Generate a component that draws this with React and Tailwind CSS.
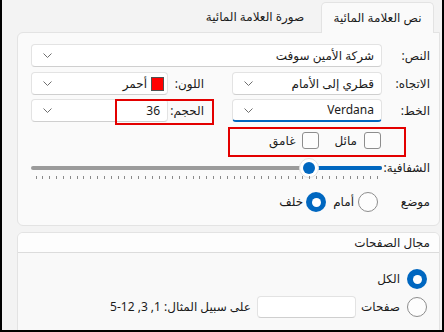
import React from 'react';

const TICKS = Array.from({ length: 51 }, (_, i) => i);

function Chevron() {
    return (
        <svg width="9" height="5" viewBox="0 0 9 5" className="shrink-0">
            <path d="M0.5 0.5 L4.5 4.5 L8.5 0.5" fill="none" stroke="#6e6e6e" strokeWidth="1" />
        </svg>
    );
}

function Combo({ className = '', focused = false, children }) {
    return (
        <div
            className={`h-[23px] bg-white rounded-[4px] border border-[#e3e3e3] flex items-center justify-between pr-[7px] pl-[11px] ${focused ? 'border-b-2 border-b-[#0067c0]' : 'border-b-[#cfcfcf]'} ${className}`}
        >
            <div className="flex items-center gap-[4px]">{children}</div>
            <Chevron />
        </div>
    );
}

function Checkbox({ label }) {
    return (
        <div className="flex items-center gap-[7px]">
            <div className="w-[17px] h-[17px] rounded-[3px] border border-[#8d8d8d] bg-[#fdfdfd]" />
            <span>{label}</span>
        </div>
    );
}

function Radio({ checked }) {
    if (checked) {
        return (
            <div className="w-[20px] h-[20px] rounded-full bg-[#0067c0] flex items-center justify-center shrink-0">
                <div className="w-[9px] h-[9px] rounded-full bg-white" />
            </div>
        );
    }
    return <div className="w-[20px] h-[20px] rounded-full border border-[#8d8d8d] bg-[#fdfdfd] shrink-0" />;
}

function Slider({ fromRight = 73 }) {
    return (
        <div className="relative w-[351px] h-[24px]">
            <div className="absolute inset-x-0 top-[8px] h-[4px] rounded-full bg-[#9b9b9b]" />
            <div className="absolute right-0 top-[8px] h-[4px] rounded-full bg-[#0067c0]" style={{ width: fromRight }} />
            <div
                className="absolute top-0 w-[20px] h-[20px] rounded-full bg-white border border-[#e2e2e2] flex items-center justify-center"
                style={{ right: fromRight - 10 }}
            >
                <div className="w-[12px] h-[12px] rounded-full bg-[#0067c0]" />
            </div>
            <div className="absolute inset-x-[4px] top-[18px] flex justify-between">
                {TICKS.map(t => (
                    <div key={t} className="w-px h-[3px] bg-[#8a8a8a]" />
                ))}
            </div>
        </div>
    );
}

export default function App() {
    return (
        <div
            dir="rtl"
            className="relative w-[444px] h-[332px] overflow-hidden border-x-2 border-b-2 border-black bg-[#f3f3f3] text-[12px] leading-none text-[#1b1b1b] font-['Noto_Sans','DejaVu_Sans',sans-serif]"
        >
            {/* tab strip */}
            <div className="flex items-end h-[32px] pr-[8px] pl-[2px]">
                <div className="relative z-10 -mb-px w-[113px] h-[31px] flex items-center justify-center bg-[#fafafa] border border-b-0 border-[#e3e3e3] rounded-t-[5px]">
                    نص العلامة المائية
                </div>
                <div className="w-[132px] h-[31px] flex items-center justify-center">
                    صورة العلامة المائية
                </div>
            </div>

            {/* watermark text panel */}
            <div className="ml-[15px] mr-[2px] h-[194px] bg-[#fafafa] border border-[#e3e3e3] rounded-[6px] rounded-tr-none pr-[9px] pl-[13px] pt-[11px]">
                <div className="flex items-center">
                    <div className="w-[48px] shrink-0">النص:</div>
                    <Combo className="flex-1">شركة الأمين سوفت</Combo>
                </div>

                <div className="flex items-center mt-[5px]">
                    <div className="w-[48px] shrink-0">الاتجاه:</div>
                    <Combo className="w-[150px]">قطري إلى الأمام</Combo>
                    <div className="w-[28px] shrink-0" />
                    <div className="w-[36px] shrink-0">اللون:</div>
                    <Combo className="flex-1 !pr-[3px]">
                        <div className="w-[13px] h-[14px] bg-[#ff0000] border border-[#505050]" />
                        <span>أحمر</span>
                    </Combo>
                </div>

                <div className="flex items-center mt-[4px]">
                    <div className="w-[48px] shrink-0">الخط:</div>
                    <Combo className="w-[150px]" focused>Verdana</Combo>
                    <div className="w-[28px] shrink-0" />
                    <div className="w-[36px] shrink-0">الحجم:</div>
                    <Combo className="flex-1">36</Combo>
                </div>

                <div className="flex items-center mt-[10px] pr-[49px] gap-[15px] h-[17px]">
                    <Checkbox label="مائل" />
                    <Checkbox label="غامق" />
                </div>

                <div className="flex items-start mt-[9px]">
                    <div className="w-[48px] shrink-0 pt-[4px]">الشفافية:</div>
                    <Slider fromRight={73} />
                </div>

                <div className="flex items-center mt-[10px] h-[20px]">
                    <div className="w-[52px] shrink-0">موضع</div>
                    <Radio />
                    <span className="mr-[4px]">أمام</span>
                    <div className="mr-[7px]"><Radio checked /></div>
                    <span className="mr-[3px]">خلف</span>
                </div>
            </div>

            {/* page range panel */}
            <div className="ml-[15px] mr-[2px] mt-[6px] h-[120px] bg-[#f9f9f9] border border-[#e3e3e3] rounded-[6px] overflow-hidden">
                <div className="h-[20px] bg-[#fdfdfd] border-b border-[#dcdcdc] flex items-center pr-[9px]">
                    مجال الصفحات
                </div>
                <div className="pr-[12px] pt-[16px]">
                    <div className="flex items-center h-[20px]">
                        <Radio checked />
                        <span className="mr-[7px]">الكل</span>
                    </div>
                    <div className="flex items-center h-[22px] mt-[7px]">
                        <Radio />
                        <span className="mr-[7px] w-[38px]">صفحات</span>
                        <div className="mr-[6px] w-[99px] h-[22px] bg-white border border-[#e3e3e3] border-b-[#cfcfcf] rounded-[4px]" />
                        <span className="mr-[6px]">على سبيل المثال: 1, 3, 12-5</span>
                    </div>
                </div>
            </div>

            {/* annotation boxes */}
            <div className="absolute left-[113px] top-[99px] w-[99px] h-[26px] border-2 border-[#e30000]" />
            <div className="absolute left-[226px] top-[127px] w-[178px] h-[30px] border-2 border-[#e30000]" />
        </div>
    );
}
